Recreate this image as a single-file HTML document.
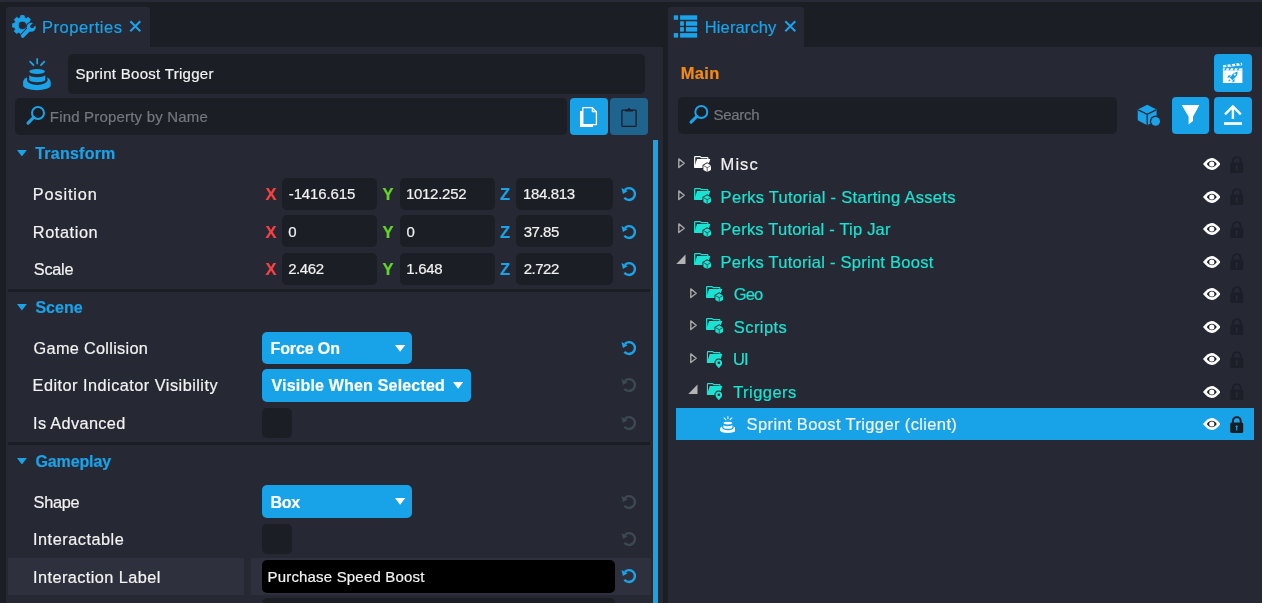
<!DOCTYPE html>
<html>
<head>
<meta charset="utf-8">
<title>Editor</title>
<style>
*{box-sizing:border-box;margin:0;padding:0}
html,body{width:1262px;height:603px;overflow:hidden;background:#1c1e26;font-family:"Liberation Sans",sans-serif;color:#fff}
.abs{position:absolute;display:block}
#root{position:relative;width:1262px;height:603px;overflow:hidden;background:#1c1e26}
.t{position:absolute;white-space:nowrap;line-height:1;-webkit-text-stroke:0.2px currentColor}
#txt{position:absolute;left:0;top:0;width:1262px;height:603px;will-change:transform}
</style>
</head>
<body>
<div id="root">
<!-- structure -->
<div class="abs" style="left:0px;top:0px;width:1262px;height:1.5px;background:#282a35"></div>
<div class="abs" style="left:6px;top:7px;width:144px;height:41px;background:#262833;border-radius:2.5px 2.5px 0 0"></div>
<div class="abs" style="left:6px;top:47px;width:657px;height:556px;background:#262833"></div>
<div class="abs" style="left:668px;top:7px;width:136px;height:41px;background:#262833;border-radius:2.5px 2.5px 0 0"></div>
<div class="abs" style="left:668px;top:47px;width:594px;height:556px;background:#262833"></div>
<div class="abs" style="left:68px;top:54px;width:577px;height:39.6px;background:#1c1e26;border-radius:5px"></div>
<div class="abs" style="left:15px;top:98px;width:552px;height:37px;background:#1c1e26;border-radius:5px"></div>
<div class="abs" style="left:570px;top:98px;width:38.2px;height:37px;background:#18a2e7;border-radius:4px"></div>
<div class="abs" style="left:610.2px;top:98px;width:37.8px;height:37px;background:#1f648e;border-radius:4px"></div>
<div class="abs" style="left:653px;top:140px;width:5px;height:463px;background:#18a2e7"></div>
<div class="abs" style="left:8px;top:288.5px;width:642px;height:3.2px;background:#1c1e26"></div>
<div class="abs" style="left:8px;top:442px;width:642px;height:3.2px;background:#1c1e26"></div>
<div class="abs" style="left:282px;top:177.8px;width:95px;height:32px;background:#1c1e26;border-radius:5px"></div>
<div class="abs" style="left:400px;top:177.8px;width:95px;height:32px;background:#1c1e26;border-radius:5px"></div>
<div class="abs" style="left:516.2px;top:177.8px;width:96.6px;height:32px;background:#1c1e26;border-radius:5px"></div>
<div class="abs" style="left:282px;top:215.2px;width:95px;height:32px;background:#1c1e26;border-radius:5px"></div>
<div class="abs" style="left:400px;top:215.2px;width:95px;height:32px;background:#1c1e26;border-radius:5px"></div>
<div class="abs" style="left:516.2px;top:215.2px;width:96.6px;height:32px;background:#1c1e26;border-radius:5px"></div>
<div class="abs" style="left:282px;top:252.7px;width:95px;height:32px;background:#1c1e26;border-radius:5px"></div>
<div class="abs" style="left:400px;top:252.7px;width:95px;height:32px;background:#1c1e26;border-radius:5px"></div>
<div class="abs" style="left:516.2px;top:252.7px;width:96.6px;height:32px;background:#1c1e26;border-radius:5px"></div>
<div class="abs" style="left:262px;top:332px;width:150.2px;height:32px;background:#18a2e7;border-radius:5px"></div>
<svg class="abs" style="left:394.7px;top:344.9px" width="10.2" height="6.8" viewBox="0 0 10.2 6.8"><path d="M0 0H10.2L5.1 6.8Z" fill="#fff"/></svg>
<div class="abs" style="left:262px;top:369px;width:209.2px;height:32.8px;background:#18a2e7;border-radius:5px"></div>
<svg class="abs" style="left:453.2px;top:382.3px" width="10.2" height="6.8" viewBox="0 0 10.2 6.8"><path d="M0 0H10.2L5.1 6.8Z" fill="#fff"/></svg>
<div class="abs" style="left:262px;top:485.2px;width:150.2px;height:32.6px;background:#18a2e7;border-radius:5px"></div>
<svg class="abs" style="left:394.7px;top:498.4px" width="10.2" height="6.8" viewBox="0 0 10.2 6.8"><path d="M0 0H10.2L5.1 6.8Z" fill="#fff"/></svg>
<div class="abs" style="left:262px;top:407.7px;width:30px;height:30px;background:#1c1e26;border-radius:5px"></div>
<div class="abs" style="left:262px;top:524px;width:30px;height:29.6px;background:#1c1e26;border-radius:5px"></div>
<div class="abs" style="left:8px;top:558px;width:236px;height:37px;background:#2e313d"></div>
<div class="abs" style="left:251px;top:558px;width:400px;height:37px;background:#2e313d"></div>
<div class="abs" style="left:262px;top:560.2px;width:353px;height:32.6px;background:#000;border-radius:5px"></div>
<div class="abs" style="left:262px;top:598.4px;width:353px;height:12px;background:#1c1e26;border-radius:5px"></div>
<svg class="abs" style="left:620.3px;top:185.2px" width="18" height="18" viewBox="-9 -9 18 18"><path d="M-4.1 -4.2A5.9 5.9 0 1 1 -4.6 3.7" fill="none" stroke="#1aa3e8" stroke-width="2.4"/><path d="M-7.5 -6L-1.300 -2.700L-6.100 -0.100Z" fill="#1aa3e8"/></svg>
<svg class="abs" style="left:620.3px;top:222.7px" width="18" height="18" viewBox="-9 -9 18 18"><path d="M-4.1 -4.2A5.9 5.9 0 1 1 -4.6 3.7" fill="none" stroke="#1aa3e8" stroke-width="2.4"/><path d="M-7.5 -6L-1.300 -2.700L-6.100 -0.100Z" fill="#1aa3e8"/></svg>
<svg class="abs" style="left:620.3px;top:260.2px" width="18" height="18" viewBox="-9 -9 18 18"><path d="M-4.1 -4.2A5.9 5.9 0 1 1 -4.6 3.7" fill="none" stroke="#1aa3e8" stroke-width="2.4"/><path d="M-7.5 -6L-1.300 -2.700L-6.100 -0.100Z" fill="#1aa3e8"/></svg>
<svg class="abs" style="left:620.3px;top:339px" width="18" height="18" viewBox="-9 -9 18 18"><path d="M-4.1 -4.2A5.9 5.9 0 1 1 -4.6 3.7" fill="none" stroke="#1aa3e8" stroke-width="2.4"/><path d="M-7.5 -6L-1.300 -2.700L-6.100 -0.100Z" fill="#1aa3e8"/></svg>
<svg class="abs" style="left:620.3px;top:376.4px" width="18" height="18" viewBox="-9 -9 18 18"><path d="M-4.1 -4.2A5.9 5.9 0 1 1 -4.6 3.7" fill="none" stroke="#3c4853" stroke-width="2.4"/><path d="M-7.5 -6L-1.300 -2.700L-6.100 -0.100Z" fill="#3c4853"/></svg>
<svg class="abs" style="left:620.3px;top:413.8px" width="18" height="18" viewBox="-9 -9 18 18"><path d="M-4.1 -4.2A5.9 5.9 0 1 1 -4.6 3.7" fill="none" stroke="#3c4853" stroke-width="2.4"/><path d="M-7.5 -6L-1.300 -2.700L-6.100 -0.100Z" fill="#3c4853"/></svg>
<svg class="abs" style="left:620.3px;top:492.5px" width="18" height="18" viewBox="-9 -9 18 18"><path d="M-4.1 -4.2A5.9 5.9 0 1 1 -4.6 3.7" fill="none" stroke="#3c4853" stroke-width="2.4"/><path d="M-7.5 -6L-1.300 -2.700L-6.100 -0.100Z" fill="#3c4853"/></svg>
<svg class="abs" style="left:620.3px;top:530px" width="18" height="18" viewBox="-9 -9 18 18"><path d="M-4.1 -4.2A5.9 5.9 0 1 1 -4.6 3.7" fill="none" stroke="#3c4853" stroke-width="2.4"/><path d="M-7.5 -6L-1.300 -2.700L-6.100 -0.100Z" fill="#3c4853"/></svg>
<svg class="abs" style="left:620.3px;top:567.4px" width="18" height="18" viewBox="-9 -9 18 18"><path d="M-4.1 -4.2A5.9 5.9 0 1 1 -4.6 3.7" fill="none" stroke="#1aa3e8" stroke-width="2.4"/><path d="M-7.5 -6L-1.300 -2.700L-6.100 -0.100Z" fill="#1aa3e8"/></svg>
<div class="abs" style="left:663px;top:47px;width:5px;height:556px;background:#1c1e26"></div>
<div class="abs" style="left:678px;top:97px;width:439px;height:37px;background:#1c1e26;border-radius:5px"></div>
<div class="abs" style="left:1214px;top:54px;width:38.2px;height:38px;background:#18a2e7;border-radius:4px"></div>
<div class="abs" style="left:1172px;top:97px;width:37px;height:37px;background:#18a2e7;border-radius:4px"></div>
<div class="abs" style="left:1214px;top:97px;width:38px;height:37px;background:#18a2e7;border-radius:4px"></div>
<div class="abs" style="left:676px;top:408px;width:578px;height:31.6px;background:#18a2e7"></div>
<!-- icons -->
<svg class="abs" style="left:17.2px;top:149.8px" width="9.8" height="6.5" viewBox="0 0 9.8 6.5"><path d="M0 0H9.8L4.9 6.5Z" fill="#1aa3e8"/></svg>
<svg class="abs" style="left:17.2px;top:304px" width="9.8" height="6.5" viewBox="0 0 9.8 6.5"><path d="M0 0H9.8L4.9 6.5Z" fill="#1aa3e8"/></svg>
<svg class="abs" style="left:17.2px;top:457.9px" width="9.8" height="6.5" viewBox="0 0 9.8 6.5"><path d="M0 0H9.8L4.9 6.5Z" fill="#1aa3e8"/></svg>
<svg class="abs" style="left:10px;top:13px" width="28" height="27" viewBox="0 0 28 27"><path d="M10.34 4.67L10.71 2.54L14.09 2.54L14.46 4.67L16.41 5.48L18.17 4.23L20.57 6.63L19.32 8.39L20.13 10.34L22.26 10.71L22.26 14.09L20.13 14.46L19.32 16.41L20.57 18.17L18.17 20.57L16.41 19.32L14.46 20.13L14.09 22.26L10.71 22.26L10.34 20.13L8.39 19.32L6.63 20.57L4.23 18.17L5.48 16.41L4.67 14.46L2.54 14.09L2.54 10.71L4.67 10.34L5.48 8.39L4.23 6.63L6.63 4.23L8.39 5.48ZM16.50 12.40A4.1 4.1 0 1 0 8.30 12.40A4.1 4.1 0 1 0 16.50 12.40Z" fill="#1aa3e8" fill-rule="evenodd" stroke="#1aa3e8" stroke-width="0.8" stroke-linejoin="round"/><path d="M10.50 26.50L27.50 9.50L27.50 27.00Z" fill="#262833"/><path d="M12.70 22.90L20.70 14.60" stroke="#262833" stroke-width="5.8" stroke-linecap="round"/><circle cx="21.20" cy="14.20" r="5.5" fill="#262833"/><path d="M12.70 22.90L20.20 15.20" stroke="#1aa3e8" stroke-width="3.9" stroke-linecap="round"/><circle cx="21.20" cy="14.20" r="4.5" fill="#1aa3e8"/><path d="M21.70 13.70L26.50 8.90" stroke="#262833" stroke-width="3.4" stroke-linecap="butt"/><circle cx="21.90" cy="13.50" r="1.7" fill="#262833"/></svg>
<svg class="abs" style="left:129.2px;top:20.2px" width="13" height="13" viewBox="0 0 13 13"><path d="M1.3 1.3L11.3 11.3M11.3 1.3L1.3 11.3" stroke="#1aa3e8" stroke-width="2" fill="none"/></svg>
<svg class="abs" style="left:784.2px;top:20.2px" width="13" height="13" viewBox="0 0 13 13"><path d="M1.3 1.3L11.3 11.3M11.3 1.3L1.3 11.3" stroke="#1aa3e8" stroke-width="2" fill="none"/></svg>
<svg class="abs" style="left:25.2px;top:104.6px" width="21" height="21.1" viewBox="0 0 21 21.1"><circle cx="13.00" cy="8.00" r="6" fill="none" stroke="#1aa3e8" stroke-width="2"/><path d="M8.64 12.41L3.00 18.10" stroke="#1aa3e8" stroke-width="3" stroke-linecap="round"/></svg>
<svg class="abs" style="left:687.8px;top:104px" width="21.3" height="21.2" viewBox="0 0 21.3 21.2"><circle cx="13.30" cy="8.00" r="6" fill="none" stroke="#1aa3e8" stroke-width="2"/><path d="M8.89 12.36L3.00 18.20" stroke="#1aa3e8" stroke-width="3" stroke-linecap="round"/></svg>
<svg class="abs" style="left:22.7px;top:58px" width="28" height="33" viewBox="0 0 28 33" preserveAspectRatio="none"><path d="M0.1 24.2A13.8 7 0 0 1 27.7 24.2V27.2A13.8 5 0 0 1 0.1 27.2Z" fill="#1aa3e8"/><ellipse cx="14.2" cy="22.2" rx="10.2" ry="4.8" fill="#262833"/><path d="M4 14H24.4V22.2H4Z" fill="#262833"/><path d="M6.2 16.8A8 2.5 0 0 0 22.2 16.8V21.7A8 2.5 0 0 1 6.2 21.7Z" fill="#1aa3e8"/><ellipse cx="14.1" cy="13.5" rx="7.8" ry="2.5" fill="#1aa3e8"/><path d="M14.2 0.900V5.4M7.100 3.600L10.500 7M21.300 3.600L18 7" stroke="#1aa3e8" stroke-width="1.8" stroke-linecap="round" fill="none"/></svg>
<svg class="abs" style="left:719.8px;top:416px" width="15.6" height="17.4" viewBox="0 0 28 33" preserveAspectRatio="none"><path d="M0.1 24.2A13.8 7 0 0 1 27.7 24.2V27.2A13.8 5 0 0 1 0.1 27.2Z" fill="#fff"/><ellipse cx="14.2" cy="22.2" rx="10.2" ry="4.8" fill="#18a2e7"/><path d="M4 14H24.4V22.2H4Z" fill="#18a2e7"/><path d="M6.2 16.8A8 2.5 0 0 0 22.2 16.8V21.7A8 2.5 0 0 1 6.2 21.7Z" fill="#fff"/><ellipse cx="14.1" cy="13.5" rx="7.8" ry="2.5" fill="#fff"/><path d="M14.2 0.900V5.4M7.100 3.600L10.500 7M21.300 3.600L18 7" stroke="#fff" stroke-width="1.8" stroke-linecap="round" fill="none"/></svg>
<svg class="abs" style="left:579px;top:106px" width="20" height="22" viewBox="0 0 20 22"><path d="M1 5H14V21H1Z" fill="#fff"/><path d="M3.8 1.6H13.2L17.4 5.8V18.6H3.8Z" fill="#18a2e7" stroke="#fff" stroke-width="1.3" stroke-linejoin="round"/><path d="M13.2 1.6V5.8H17.4Z" fill="#8fd0f3" stroke="#fff" stroke-width="1" stroke-linejoin="round"/></svg>
<svg class="abs" style="left:620px;top:105px" width="18" height="23" viewBox="0 0 18 23"><rect x="1.9" y="5.2" width="14.2" height="16.2" rx="0.8" fill="none" stroke="#1c1e26" stroke-width="1.3"/><path d="M5.2 6.4V4.6H7.6L9 2.6L10.4 4.600H12.8V6.4Z" fill="#1c1e26"/></svg>
<svg class="abs" style="left:673px;top:15px" width="25" height="23" viewBox="0 0 25 23"><g fill="#1aa3e8"><rect x="0.8" y="0.3" width="4.3" height="4.5"/><rect x="7.1" y="0.3" width="17.0" height="4.5"/><rect x="7.1" y="6.3" width="3.8" height="4.5"/><rect x="12.9" y="6.3" width="11.2" height="4.5"/><rect x="7.1" y="12.1" width="3.8" height="4.5"/><rect x="12.9" y="12.1" width="11.2" height="4.5"/><rect x="0.8" y="18.1" width="4.3" height="4.5"/><rect x="7.1" y="18.1" width="17.0" height="4.5"/></g></svg>
<svg class="abs" style="left:1222px;top:61px" width="22" height="23" viewBox="0 0 22 23"><path d="M0.9 9.3H20.4V22H0.9Z" fill="#fff"/><path d="M0.9 7.3H20.4V9.300H0.9Z" fill="#fff"/><path d="M0.9 4.2L20 1.8L20.3 4.2L1.2 6.6Z" fill="#fff"/><path d="M3.2 7.1l1.6 0l-1 2.2l-1.6 0zM7.4 7.1l1.6 0l-1 2.2l-1.6 0zM11.6 7.1l1.6 0l-1 2.2l-1.6 0zM15.8 7.1l1.600 0l-1 2.200l-1.600 0z" fill="#18a2e7"/><path d="M3.6 3.7l1.6 -0.2l1 2.1l-1.6 0.2zM8 3.150l1.6 -0.2l1 2.1l-1.6 0.2zM12.4 2.6l1.6 -0.2l1 2.1l-1.6 0.2zM16.8 2.050l1.600 -0.200l1 2.100l-1.600 0.200z" fill="#18a2e7"/><g fill="#18a2e7"><path d="M15.6 10.8C13 11 10.8 12.6 9.3 15L7.8 16.6L10.4 19.2L12 17.7C14.4 16.2 15.8 13.8 15.600 10.800Z"/><path d="M9 14.3L6.3 14.6L5.2 16.5L7.6 16.400Z"/><path d="M12.6 18L12.4 20.6L10.5 21.7L10.500 19.400Z"/><path d="M7.4 18.2L6 20.6L8.600 19.400Z"/></g><circle cx="12.8" cy="13.6" r="1.1" fill="#fff"/></svg>
<svg class="abs" style="left:1137px;top:104px" width="25" height="23" viewBox="0 0 25 23"><path d="M10.2 0.7L19.6 5.6V16.2L10.2 21.2L0.7 16.2V5.600Z" fill="#1aa3e8"/><path d="M1.2 5.8L10.2 10.3L19.2 5.8M10.2 10.300V21" fill="none" stroke="#262833" stroke-width="1.3"/><circle cx="18.6" cy="17.3" r="5.7" fill="#262833"/><circle cx="18.6" cy="17.3" r="4.4" fill="#1aa3e8"/></svg>
<svg class="abs" style="left:1180px;top:104px" width="22" height="22" viewBox="0 0 22 22"><path d="M1.7 1.1H19.4L13 12.8V17L8.6 20.4V12.800Z" fill="#fff"/></svg>
<svg class="abs" style="left:1222px;top:104px" width="22" height="22" viewBox="0 0 22 22"><path d="M10.9 15V2.6M3 10.3L10.9 2.4L18.8 10.300" fill="none" stroke="#fff" stroke-width="2.4"/><rect x="2" y="18.2" width="18" height="2.7" fill="#fff"/></svg>
<svg class="abs" style="left:677.5px;top:157.5px" width="8" height="12" viewBox="0 0 8 12"><path d="M0.8 0.9L6.2 5.2L0.8 9.500Z" fill="none" stroke="#a8a8a8" stroke-width="1.4" stroke-linejoin="round"/></svg>
<svg class="abs" style="left:693.8px;top:155.5px" width="19" height="19" viewBox="0 0 19 19"><path d="M0.65 11.6V1.2Q0.65 0.6 1.25 0.6H6L7.4 1.7H13.3Q13.9 1.7 13.9 2.300V3.2" fill="none" stroke="#fff" stroke-width="1.2"/><path d="M3 3H16.3L13.4 11.9H0.100Z" fill="#fff"/><path d="M13.2 6.3L17.900 9V14.4L13.2 17.100L8.5 14.4V9Z" fill="#262833"/><path d="M13.2 7.3L17 9.5V13.9L13.2 16.100L9.4 13.9V9.500Z" fill="#fff"/><path d="M9.4 9.5L13.2 11.7L17 9.500M13.2 11.700V16.100" fill="none" stroke="#262833" stroke-width="0.7"/></svg>
<svg class="abs" style="left:1202.7px;top:158.3px" width="17.6" height="12" viewBox="0 0 17.6 12"><path d="M0 6C3 2.2 6 0 8.8 0C11.6 0 14.600 2.2 17.6 6C14.600 9.8 11.6 12 8.8 12C6 12 3 9.8 0 6Z" fill="#fff"/><path d="M3.8 6C5.4 3.9 7 2.8 8.8 2.8C10.6 2.8 12.2 3.9 13.8 6C12.2 8.1 10.6 9.2 8.8 9.2C7 9.2 5.4 8.1 3.8 6Z" fill="#1a1f28"/><circle cx="8.8" cy="6" r="2.6" fill="#fff"/></svg>
<svg class="abs" style="left:1230px;top:155.5px" width="14" height="18" viewBox="0 0 14 18"><path d="M2.9 8V5A3.9 3.9 0 0 1 10.7 5V8" fill="none" stroke="#1d1f28" stroke-width="1.9"/><rect x="0.2" y="6.4" width="13" height="10.600" rx="1.5" fill="#1d1f28"/><path d="M6.7 9L8.1 11H7.3V14.500H6.100V11H5.300Z" fill="#2a2c37"/></svg>
<svg class="abs" style="left:677.5px;top:190px" width="8" height="12" viewBox="0 0 8 12"><path d="M0.8 0.9L6.2 5.2L0.8 9.500Z" fill="none" stroke="#a8a8a8" stroke-width="1.4" stroke-linejoin="round"/></svg>
<svg class="abs" style="left:693.8px;top:188px" width="19" height="19" viewBox="0 0 19 19"><path d="M0.65 11.6V1.2Q0.65 0.6 1.25 0.6H6L7.4 1.7H13.3Q13.9 1.7 13.9 2.300V3.2" fill="none" stroke="#1ae3d2" stroke-width="1.2"/><path d="M3 3H16.3L13.4 11.9H0.100Z" fill="#1ae3d2"/><path d="M13.2 6.3L17.900 9V14.4L13.2 17.100L8.5 14.4V9Z" fill="#262833"/><path d="M13.2 7.3L17 9.5V13.9L13.2 16.100L9.4 13.9V9.500Z" fill="#1ae3d2"/><path d="M9.4 9.5L13.2 11.7L17 9.500M13.2 11.700V16.100" fill="none" stroke="#262833" stroke-width="0.7"/></svg>
<svg class="abs" style="left:1202.7px;top:190.8px" width="17.6" height="12" viewBox="0 0 17.6 12"><path d="M0 6C3 2.2 6 0 8.8 0C11.6 0 14.600 2.2 17.6 6C14.600 9.8 11.6 12 8.8 12C6 12 3 9.8 0 6Z" fill="#fff"/><path d="M3.8 6C5.4 3.9 7 2.8 8.8 2.8C10.6 2.8 12.2 3.9 13.8 6C12.2 8.1 10.6 9.2 8.8 9.2C7 9.2 5.4 8.1 3.8 6Z" fill="#1a1f28"/><circle cx="8.8" cy="6" r="2.6" fill="#fff"/></svg>
<svg class="abs" style="left:1230px;top:188px" width="14" height="18" viewBox="0 0 14 18"><path d="M2.9 8V5A3.9 3.9 0 0 1 10.7 5V8" fill="none" stroke="#1d1f28" stroke-width="1.9"/><rect x="0.2" y="6.4" width="13" height="10.600" rx="1.5" fill="#1d1f28"/><path d="M6.7 9L8.1 11H7.3V14.500H6.100V11H5.300Z" fill="#2a2c37"/></svg>
<svg class="abs" style="left:677.5px;top:222.5px" width="8" height="12" viewBox="0 0 8 12"><path d="M0.8 0.9L6.2 5.2L0.8 9.500Z" fill="none" stroke="#a8a8a8" stroke-width="1.4" stroke-linejoin="round"/></svg>
<svg class="abs" style="left:693.8px;top:220.5px" width="19" height="19" viewBox="0 0 19 19"><path d="M0.65 11.6V1.2Q0.65 0.6 1.25 0.6H6L7.4 1.7H13.3Q13.9 1.7 13.9 2.300V3.2" fill="none" stroke="#1ae3d2" stroke-width="1.2"/><path d="M3 3H16.3L13.4 11.9H0.100Z" fill="#1ae3d2"/><path d="M13.2 6.3L17.900 9V14.4L13.2 17.100L8.5 14.4V9Z" fill="#262833"/><path d="M13.2 7.3L17 9.5V13.9L13.2 16.100L9.4 13.9V9.500Z" fill="#1ae3d2"/><path d="M9.4 9.5L13.2 11.7L17 9.500M13.2 11.700V16.100" fill="none" stroke="#262833" stroke-width="0.7"/></svg>
<svg class="abs" style="left:1202.7px;top:223.3px" width="17.6" height="12" viewBox="0 0 17.6 12"><path d="M0 6C3 2.2 6 0 8.8 0C11.6 0 14.600 2.2 17.6 6C14.600 9.8 11.6 12 8.8 12C6 12 3 9.8 0 6Z" fill="#fff"/><path d="M3.8 6C5.4 3.9 7 2.8 8.8 2.8C10.6 2.8 12.2 3.9 13.8 6C12.2 8.1 10.6 9.2 8.8 9.2C7 9.2 5.4 8.1 3.8 6Z" fill="#1a1f28"/><circle cx="8.8" cy="6" r="2.6" fill="#fff"/></svg>
<svg class="abs" style="left:1230px;top:220.5px" width="14" height="18" viewBox="0 0 14 18"><path d="M2.9 8V5A3.9 3.9 0 0 1 10.7 5V8" fill="none" stroke="#1d1f28" stroke-width="1.9"/><rect x="0.2" y="6.4" width="13" height="10.600" rx="1.5" fill="#1d1f28"/><path d="M6.7 9L8.1 11H7.3V14.500H6.100V11H5.300Z" fill="#2a2c37"/></svg>
<svg class="abs" style="left:674.6px;top:254px" width="11" height="11" viewBox="0 0 11 11"><path d="M10.5 0.500V10H1.300Z" fill="#b4b4b4"/></svg>
<svg class="abs" style="left:693.8px;top:253px" width="19" height="19" viewBox="0 0 19 19"><path d="M0.65 11.6V1.2Q0.65 0.6 1.25 0.6H6L7.4 1.7H13.3Q13.9 1.7 13.9 2.300V3.2" fill="none" stroke="#1ae3d2" stroke-width="1.2"/><path d="M3 3H16.3L13.4 11.9H0.100Z" fill="#1ae3d2"/><path d="M13.2 6.3L17.900 9V14.4L13.2 17.100L8.5 14.4V9Z" fill="#262833"/><path d="M13.2 7.3L17 9.5V13.9L13.2 16.100L9.4 13.9V9.500Z" fill="#1ae3d2"/><path d="M9.4 9.5L13.2 11.7L17 9.500M13.2 11.700V16.100" fill="none" stroke="#262833" stroke-width="0.7"/></svg>
<svg class="abs" style="left:1202.7px;top:255.8px" width="17.6" height="12" viewBox="0 0 17.6 12"><path d="M0 6C3 2.2 6 0 8.8 0C11.6 0 14.600 2.2 17.6 6C14.600 9.8 11.6 12 8.8 12C6 12 3 9.8 0 6Z" fill="#fff"/><path d="M3.8 6C5.4 3.9 7 2.8 8.8 2.8C10.6 2.8 12.2 3.9 13.8 6C12.2 8.1 10.6 9.2 8.8 9.2C7 9.2 5.4 8.1 3.8 6Z" fill="#1a1f28"/><circle cx="8.8" cy="6" r="2.6" fill="#fff"/></svg>
<svg class="abs" style="left:1230px;top:253px" width="14" height="18" viewBox="0 0 14 18"><path d="M2.9 8V5A3.9 3.9 0 0 1 10.7 5V8" fill="none" stroke="#1d1f28" stroke-width="1.9"/><rect x="0.2" y="6.4" width="13" height="10.600" rx="1.5" fill="#1d1f28"/><path d="M6.7 9L8.1 11H7.3V14.500H6.100V11H5.300Z" fill="#2a2c37"/></svg>
<svg class="abs" style="left:690px;top:287.5px" width="8" height="12" viewBox="0 0 8 12"><path d="M0.8 0.9L6.2 5.2L0.8 9.500Z" fill="none" stroke="#a8a8a8" stroke-width="1.4" stroke-linejoin="round"/></svg>
<svg class="abs" style="left:706.3px;top:285.5px" width="19" height="19" viewBox="0 0 19 19"><path d="M0.65 11.6V1.2Q0.65 0.6 1.25 0.6H6L7.4 1.7H13.3Q13.9 1.7 13.9 2.300V3.2" fill="none" stroke="#1ae3d2" stroke-width="1.2"/><path d="M3 3H16.3L13.4 11.9H0.100Z" fill="#1ae3d2"/><path d="M13.2 6.3L17.900 9V14.4L13.2 17.100L8.5 14.4V9Z" fill="#262833"/><path d="M13.2 7.3L17 9.5V13.9L13.2 16.100L9.4 13.9V9.500Z" fill="#1ae3d2"/><path d="M9.4 9.5L13.2 11.7L17 9.500M13.2 11.700V16.100" fill="none" stroke="#262833" stroke-width="0.7"/></svg>
<svg class="abs" style="left:1202.7px;top:288.3px" width="17.6" height="12" viewBox="0 0 17.6 12"><path d="M0 6C3 2.2 6 0 8.8 0C11.6 0 14.600 2.2 17.6 6C14.600 9.8 11.6 12 8.8 12C6 12 3 9.8 0 6Z" fill="#fff"/><path d="M3.8 6C5.4 3.9 7 2.8 8.8 2.8C10.6 2.8 12.2 3.9 13.8 6C12.2 8.1 10.6 9.2 8.8 9.2C7 9.2 5.4 8.1 3.8 6Z" fill="#1a1f28"/><circle cx="8.8" cy="6" r="2.6" fill="#fff"/></svg>
<svg class="abs" style="left:1230px;top:285.5px" width="14" height="18" viewBox="0 0 14 18"><path d="M2.9 8V5A3.9 3.9 0 0 1 10.7 5V8" fill="none" stroke="#1d1f28" stroke-width="1.9"/><rect x="0.2" y="6.4" width="13" height="10.600" rx="1.5" fill="#1d1f28"/><path d="M6.7 9L8.1 11H7.3V14.500H6.100V11H5.300Z" fill="#2a2c37"/></svg>
<svg class="abs" style="left:690px;top:320px" width="8" height="12" viewBox="0 0 8 12"><path d="M0.8 0.9L6.2 5.2L0.8 9.500Z" fill="none" stroke="#a8a8a8" stroke-width="1.4" stroke-linejoin="round"/></svg>
<svg class="abs" style="left:706.3px;top:318px" width="19" height="19" viewBox="0 0 19 19"><path d="M0.65 11.6V1.2Q0.65 0.6 1.25 0.6H6L7.4 1.7H13.3Q13.9 1.7 13.9 2.300V3.2" fill="none" stroke="#1ae3d2" stroke-width="1.2"/><path d="M3 3H16.3L13.4 11.9H0.100Z" fill="#1ae3d2"/><path d="M13.2 6.3L17.900 9V14.4L13.2 17.100L8.5 14.4V9Z" fill="#262833"/><path d="M13.2 7.3L17 9.5V13.9L13.2 16.100L9.4 13.9V9.500Z" fill="#1ae3d2"/><path d="M9.4 9.5L13.2 11.7L17 9.500M13.2 11.700V16.100" fill="none" stroke="#262833" stroke-width="0.7"/></svg>
<svg class="abs" style="left:1202.7px;top:320.8px" width="17.6" height="12" viewBox="0 0 17.6 12"><path d="M0 6C3 2.2 6 0 8.8 0C11.6 0 14.600 2.2 17.6 6C14.600 9.8 11.6 12 8.8 12C6 12 3 9.8 0 6Z" fill="#fff"/><path d="M3.8 6C5.4 3.9 7 2.8 8.8 2.8C10.6 2.8 12.2 3.9 13.8 6C12.2 8.1 10.6 9.2 8.8 9.2C7 9.2 5.4 8.1 3.8 6Z" fill="#1a1f28"/><circle cx="8.8" cy="6" r="2.6" fill="#fff"/></svg>
<svg class="abs" style="left:1230px;top:318px" width="14" height="18" viewBox="0 0 14 18"><path d="M2.9 8V5A3.9 3.9 0 0 1 10.7 5V8" fill="none" stroke="#1d1f28" stroke-width="1.9"/><rect x="0.2" y="6.4" width="13" height="10.600" rx="1.5" fill="#1d1f28"/><path d="M6.7 9L8.1 11H7.3V14.500H6.100V11H5.300Z" fill="#2a2c37"/></svg>
<svg class="abs" style="left:690px;top:352.5px" width="8" height="12" viewBox="0 0 8 12"><path d="M0.8 0.9L6.2 5.2L0.8 9.500Z" fill="none" stroke="#a8a8a8" stroke-width="1.4" stroke-linejoin="round"/></svg>
<svg class="abs" style="left:706.3px;top:350.5px" width="19" height="19" viewBox="0 0 19 19"><g transform="translate(0.8 0) scale(0.951 1)"><path d="M0.65 11.6V1.2Q0.65 0.6 1.25 0.6H6L7.4 1.7H13.3Q13.9 1.7 13.9 2.300V3.2" fill="none" stroke="#1ae3d2" stroke-width="1.2"/><path d="M3 3H16.3L13.4 11.9H0.100Z" fill="#1ae3d2"/></g><path d="M12.8 8.6C10.9 8.6 9.5 10.1 9.5 11.9C9.5 13.9 11.4 15.3 12.8 17.2C14.2 15.3 16.1 13.9 16.1 11.9C16.1 10.1 14.7 8.6 12.8 8.600Z" fill="#262833" stroke="#262833" stroke-width="2.2" stroke-linejoin="round"/><path d="M12.8 8.6C10.9 8.6 9.5 10.1 9.5 11.9C9.5 13.9 11.4 15.3 12.8 17.2C14.2 15.3 16.1 13.9 16.1 11.9C16.1 10.1 14.7 8.6 12.8 8.600Z" fill="#1ae3d2"/><circle cx="12.8" cy="11.8" r="1.25" fill="#262833"/></svg>
<svg class="abs" style="left:1202.7px;top:353.3px" width="17.6" height="12" viewBox="0 0 17.6 12"><path d="M0 6C3 2.2 6 0 8.8 0C11.6 0 14.600 2.2 17.6 6C14.600 9.8 11.6 12 8.8 12C6 12 3 9.8 0 6Z" fill="#fff"/><path d="M3.8 6C5.4 3.9 7 2.8 8.8 2.8C10.6 2.8 12.2 3.9 13.8 6C12.2 8.1 10.6 9.2 8.8 9.2C7 9.2 5.4 8.1 3.8 6Z" fill="#1a1f28"/><circle cx="8.8" cy="6" r="2.6" fill="#fff"/></svg>
<svg class="abs" style="left:1230px;top:350.5px" width="14" height="18" viewBox="0 0 14 18"><path d="M2.9 8V5A3.9 3.9 0 0 1 10.7 5V8" fill="none" stroke="#1d1f28" stroke-width="1.9"/><rect x="0.2" y="6.4" width="13" height="10.600" rx="1.5" fill="#1d1f28"/><path d="M6.7 9L8.1 11H7.3V14.500H6.100V11H5.300Z" fill="#2a2c37"/></svg>
<svg class="abs" style="left:687.1px;top:384px" width="11" height="11" viewBox="0 0 11 11"><path d="M10.5 0.500V10H1.300Z" fill="#b4b4b4"/></svg>
<svg class="abs" style="left:706.3px;top:383px" width="19" height="19" viewBox="0 0 19 19"><g transform="translate(0.8 0) scale(0.951 1)"><path d="M0.65 11.6V1.2Q0.65 0.6 1.25 0.6H6L7.4 1.7H13.3Q13.9 1.7 13.9 2.300V3.2" fill="none" stroke="#1ae3d2" stroke-width="1.2"/><path d="M3 3H16.3L13.4 11.9H0.100Z" fill="#1ae3d2"/></g><path d="M12.8 8.6C10.9 8.6 9.5 10.1 9.5 11.9C9.5 13.9 11.4 15.3 12.8 17.2C14.2 15.3 16.1 13.9 16.1 11.9C16.1 10.1 14.7 8.6 12.8 8.600Z" fill="#262833" stroke="#262833" stroke-width="2.2" stroke-linejoin="round"/><path d="M12.8 8.6C10.9 8.6 9.5 10.1 9.5 11.9C9.5 13.9 11.4 15.3 12.8 17.2C14.2 15.3 16.1 13.9 16.1 11.9C16.1 10.1 14.7 8.6 12.8 8.600Z" fill="#1ae3d2"/><circle cx="12.8" cy="11.8" r="1.25" fill="#262833"/></svg>
<svg class="abs" style="left:1202.7px;top:385.8px" width="17.6" height="12" viewBox="0 0 17.6 12"><path d="M0 6C3 2.2 6 0 8.8 0C11.6 0 14.600 2.2 17.6 6C14.600 9.8 11.6 12 8.8 12C6 12 3 9.8 0 6Z" fill="#fff"/><path d="M3.8 6C5.4 3.9 7 2.8 8.8 2.8C10.6 2.8 12.2 3.9 13.8 6C12.2 8.1 10.6 9.2 8.8 9.2C7 9.2 5.4 8.1 3.8 6Z" fill="#1a1f28"/><circle cx="8.8" cy="6" r="2.6" fill="#fff"/></svg>
<svg class="abs" style="left:1230px;top:383px" width="14" height="18" viewBox="0 0 14 18"><path d="M2.9 8V5A3.9 3.9 0 0 1 10.7 5V8" fill="none" stroke="#1d1f28" stroke-width="1.9"/><rect x="0.2" y="6.4" width="13" height="10.600" rx="1.5" fill="#1d1f28"/><path d="M6.7 9L8.1 11H7.3V14.500H6.100V11H5.300Z" fill="#2a2c37"/></svg>
<svg class="abs" style="left:1202.7px;top:418.3px" width="17.6" height="12" viewBox="0 0 17.6 12"><path d="M0 6C3 2.2 6 0 8.8 0C11.6 0 14.600 2.2 17.6 6C14.600 9.8 11.6 12 8.8 12C6 12 3 9.8 0 6Z" fill="#fff"/><path d="M3.8 6C5.4 3.9 7 2.8 8.8 2.8C10.6 2.8 12.2 3.9 13.8 6C12.2 8.1 10.6 9.2 8.8 9.2C7 9.2 5.4 8.1 3.8 6Z" fill="#1a1f28"/><circle cx="8.8" cy="6" r="2.6" fill="#fff"/></svg>
<svg class="abs" style="left:1230px;top:415.5px" width="14" height="18" viewBox="0 0 14 18"><path d="M2.9 8V5A3.9 3.9 0 0 1 10.7 5V8" fill="none" stroke="#1a1c24" stroke-width="1.9"/><rect x="0.2" y="6.4" width="13" height="10.600" rx="1.5" fill="#1a1c24"/><path d="M6.7 9L8.1 11H7.3V14.500H6.100V11H5.300Z" fill="#18a2e7"/></svg>
<!-- text -->
<div id="txt">
<div class="t" style="left:42px;top:19px;font-size:16.5px;color:#1aa3e8;letter-spacing:0.52px">Properties</div>
<div class="t" style="left:704.8px;top:19px;font-size:16.5px;color:#1aa3e8;letter-spacing:0.11px">Hierarchy</div>
<div class="t" style="left:75.4px;top:66px;font-size:15px;color:#f2f2f2;letter-spacing:0.29px">Sprint Boost Trigger</div>
<div class="t" style="left:49.8px;top:109px;font-size:15px;color:#74777e;letter-spacing:0.19px">Find Property by Name</div>
<div class="t" style="left:35.2px;top:146px;font-size:16px;color:#1aa3e8;font-weight:bold;letter-spacing:0.24px">Transform</div>
<div class="t" style="left:32.8px;top:186px;font-size:16.3px;color:#f2f2f2;letter-spacing:0.86px">Position</div>
<div class="t" style="left:32.8px;top:224px;font-size:16.3px;color:#f2f2f2;letter-spacing:0.6px">Rotation</div>
<div class="t" style="left:33.8px;top:261px;font-size:16.3px;color:#f2f2f2;letter-spacing:-0.27px">Scale</div>
<div class="t" style="left:35.4px;top:300px;font-size:16px;color:#1aa3e8;font-weight:bold;letter-spacing:0.04px">Scene</div>
<div class="t" style="left:33.6px;top:340px;font-size:16.3px;color:#f2f2f2;letter-spacing:0.3px">Game Collision</div>
<div class="t" style="left:32.6px;top:377px;font-size:16.3px;color:#f2f2f2;letter-spacing:0.48px">Editor Indicator Visibility</div>
<div class="t" style="left:33px;top:415px;font-size:16.3px;color:#f2f2f2;letter-spacing:0.36px">Is Advanced</div>
<div class="t" style="left:35.4px;top:454px;font-size:16px;color:#1aa3e8;font-weight:bold;letter-spacing:-0.11px">Gameplay</div>
<div class="t" style="left:33.6px;top:494px;font-size:16.3px;color:#f2f2f2;letter-spacing:-0.26px">Shape</div>
<div class="t" style="left:33px;top:531px;font-size:16.3px;color:#f2f2f2;letter-spacing:0.52px">Interactable</div>
<div class="t" style="left:33px;top:569px;font-size:16.3px;color:#f2f2f2;letter-spacing:0.43px">Interaction Label</div>
<div class="t" style="left:265.6px;top:186px;font-size:16.5px;color:#fb4141;font-weight:bold">X</div>
<div class="t" style="left:382.4px;top:186px;font-size:16.5px;color:#62d628;font-weight:bold">Y</div>
<div class="t" style="left:499.9px;top:186px;font-size:16.5px;color:#1aa3e8;font-weight:bold">Z</div>
<div class="t" style="left:265.6px;top:224px;font-size:16.5px;color:#fb4141;font-weight:bold">X</div>
<div class="t" style="left:382.4px;top:224px;font-size:16.5px;color:#62d628;font-weight:bold">Y</div>
<div class="t" style="left:499.9px;top:224px;font-size:16.5px;color:#1aa3e8;font-weight:bold">Z</div>
<div class="t" style="left:265.6px;top:261px;font-size:16.5px;color:#fb4141;font-weight:bold">X</div>
<div class="t" style="left:382.4px;top:261px;font-size:16.5px;color:#62d628;font-weight:bold">Y</div>
<div class="t" style="left:499.9px;top:261px;font-size:16.5px;color:#1aa3e8;font-weight:bold">Z</div>
<div class="t" style="left:288.8px;top:186px;font-size:15px;color:#f2f2f2;letter-spacing:-0.14px">-1416.615</div>
<div class="t" style="left:405.9px;top:186px;font-size:15px;color:#f2f2f2;letter-spacing:-0.27px">1012.252</div>
<div class="t" style="left:523.1px;top:186px;font-size:15px;color:#f2f2f2;letter-spacing:-0.36px">184.813</div>
<div class="t" style="left:288.2px;top:224px;font-size:15px;color:#f2f2f2">0</div>
<div class="t" style="left:406.4px;top:224px;font-size:15px;color:#f2f2f2">0</div>
<div class="t" style="left:523.7px;top:224px;font-size:15px;color:#f2f2f2;letter-spacing:-0.5px">37.85</div>
<div class="t" style="left:288.2px;top:261px;font-size:15px;color:#f2f2f2;letter-spacing:-0.42px">2.462</div>
<div class="t" style="left:406.3px;top:261px;font-size:15px;color:#f2f2f2;letter-spacing:-0.32px">1.648</div>
<div class="t" style="left:523.7px;top:261px;font-size:15px;color:#f2f2f2;letter-spacing:-0.5px">2.722</div>
<div class="t" style="left:270.5px;top:341px;font-size:16px;color:#fff;font-weight:bold;letter-spacing:-0.11px">Force On</div>
<div class="t" style="left:271.5px;top:378px;font-size:16px;color:#fff;font-weight:bold;letter-spacing:0.19px">Visible When Selected</div>
<div class="t" style="left:270.5px;top:495px;font-size:16px;color:#fff;font-weight:bold;letter-spacing:-0.31px">Box</div>
<div class="t" style="left:267.5px;top:569px;font-size:15px;color:#f2f2f2;letter-spacing:0.18px">Purchase Speed Boost</div>
<div class="t" style="left:680.8px;top:65px;font-size:16.5px;color:#f58b16;font-weight:bold;letter-spacing:0.3px">Main</div>
<div class="t" style="left:713.6px;top:107px;font-size:15px;color:#74777e;letter-spacing:-0.32px">Search</div>
<div class="t" style="left:720.6px;top:156px;font-size:16.5px;color:#f2f2f2;letter-spacing:1.05px">Misc</div>
<div class="t" style="left:720.6px;top:189px;font-size:16.5px;color:#1ae3d2;letter-spacing:0.3px">Perks Tutorial - Starting Assets</div>
<div class="t" style="left:720.6px;top:221px;font-size:16.5px;color:#1ae3d2;letter-spacing:0.21px">Perks Tutorial - Tip Jar</div>
<div class="t" style="left:720.6px;top:254px;font-size:16.5px;color:#1ae3d2;letter-spacing:0.26px">Perks Tutorial - Sprint Boost</div>
<div class="t" style="left:733.8px;top:286px;font-size:16.5px;color:#1ae3d2;letter-spacing:-0.91px">Geo</div>
<div class="t" style="left:733.8px;top:319px;font-size:16.5px;color:#1ae3d2;letter-spacing:0.44px">Scripts</div>
<div class="t" style="left:733px;top:351px;font-size:16.5px;color:#1ae3d2;letter-spacing:-0.92px">UI</div>
<div class="t" style="left:733.2px;top:384px;font-size:16.5px;color:#1ae3d2;letter-spacing:0.46px">Triggers</div>
<div class="t" style="left:746.6px;top:416px;font-size:16.5px;color:#f2f2f2;letter-spacing:0.37px">Sprint Boost Trigger (client)</div>
</div>
</div>
</body>
</html>
